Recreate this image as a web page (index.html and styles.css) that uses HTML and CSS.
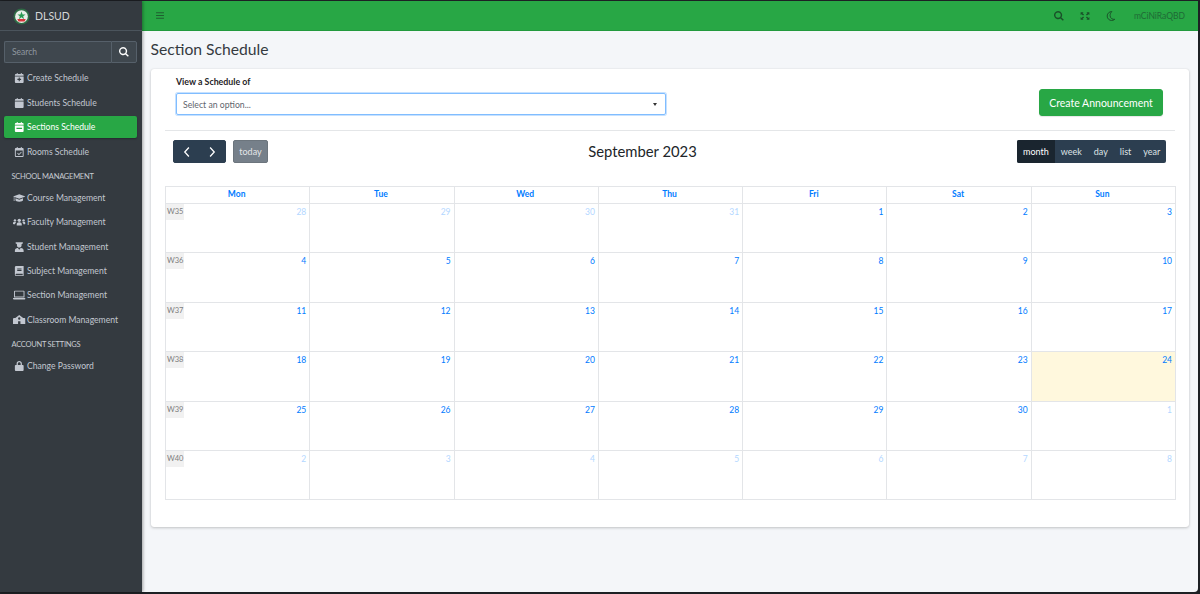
FILE: index.html
```html
<!DOCTYPE html>
<html lang="en">
<head>
<meta charset="utf-8">
<title>Section Schedule</title>
<link rel="stylesheet" href="styles.css">
</head>
<body>
<svg class="defs" width="0" height="0" aria-hidden="true">
  <defs>
    <symbol id="cal" viewBox="0 0 448 512"><path d="M96 0h48v48h160V0h48v48h48a48 48 0 0 1 48 48v48H0V96a48 48 0 0 1 48-48h48zM0 176h448v288a48 48 0 0 1-48 48H48a48 48 0 0 1-48-48z"/></symbol>
    <symbol id="cal-plus" viewBox="0 0 448 512"><path fill-rule="evenodd" d="M96 0h48v48h160V0h48v48h48a48 48 0 0 1 48 48v48H0V96a48 48 0 0 1 48-48h48zM0 176h448v288a48 48 0 0 1-48 48H48a48 48 0 0 1-48-48zM196 230v66h-66v56h66v66h56v-66h66v-56h-66v-66z"/></symbol>
    <symbol id="cal-minus" viewBox="0 0 448 512"><path fill-rule="evenodd" d="M96 0h48v48h160V0h48v48h48a48 48 0 0 1 48 48v48H0V96a48 48 0 0 1 48-48h48zM0 176h448v288a48 48 0 0 1-48 48H48a48 48 0 0 1-48-48zM80 290v70h288v-70z"/></symbol>
    <symbol id="cal-check" viewBox="0 0 448 512"><path fill-rule="evenodd" d="M96 0h48v48h160V0h48v48h48a48 48 0 0 1 48 48v368a48 48 0 0 1-48 48H48a48 48 0 0 1-48-48V96a48 48 0 0 1 48-48h48zM48 176v288h352V176zM320 240l32 32-144 144-88-88 32-32 56 56z"/></symbol>
    <symbol id="grad" viewBox="0 0 640 512"><path d="M320 64 640 176 320 288 0 176zM128 272l192 68 192-68v104c0 36-86 72-192 72s-192-36-192-72zM40 200l32 12v130l20 60H28l12-60z"/></symbol>
    <symbol id="users" viewBox="0 0 640 512"><circle cx="320" cy="170" r="85"/><circle cx="100" cy="170" r="60"/><circle cx="540" cy="170" r="60"/><path d="M190 430v-50c0-70 50-110 110-110h40c60 0 110 40 110 110v50zM0 350v-40c0-40 30-70 70-70h60c14 0 26 4 38 10-38 26-60 66-62 120H30c-16 0-30-4-30-20zM640 350v-40c0-40-30-70-70-70h-60c-14 0-26 4-38 10 38 26 60 66 62 120h76c16 0 30-4 30-20z"/></symbol>
    <symbol id="teacher" viewBox="0 0 448 512"><path d="M40 16h368v64l-64 16v70c0 66-54 118-120 118S104 232 104 166V96L40 80zM0 512v-70c0-74 58-134 132-134h20l72 90 72-90h20c74 0 132 60 132 134v70z"/></symbol>
    <symbol id="book" viewBox="0 0 448 512"><path fill-rule="evenodd" d="M70 0h378v512H70a70 70 0 0 1-70-70V70A70 70 0 0 1 70 0zm50 130v44h220v-44zm0 80v44h220v-44zM70 400a34 34 0 0 0 0 68h330v-68z"/></symbol>
    <symbol id="laptop" viewBox="0 0 640 512"><path fill-rule="evenodd" d="M90 32h460a38 38 0 0 1 38 38v310H52V70a38 38 0 0 1 38-38zm10 50v250h440V82zM0 412h640v20a48 48 0 0 1-48 48H48a48 48 0 0 1-48-48z"/></symbol>
    <symbol id="school" viewBox="0 0 640 512"><path fill-rule="evenodd" d="M320 0 520 150h70a50 50 0 0 1 50 50v262H0V200a50 50 0 0 1 50-50h70zm0 120a60 60 0 1 0 0 120 60 60 0 0 0 0-120zM260 320v142h120V320z"/></symbol>
    <symbol id="lock" viewBox="0 0 448 512"><path fill-rule="evenodd" d="M224 0c76 0 136 60 136 136v64h40a48 48 0 0 1 48 48v216a48 48 0 0 1-48 48H48a48 48 0 0 1-48-48V248a48 48 0 0 1 48-48h40v-64C88 60 148 0 224 0zm0 64c-40 0-72 32-72 72v64h144v-64c0-40-32-72-72-72z"/></symbol>
    <symbol id="search" viewBox="0 0 512 512"><path fill-rule="evenodd" d="M208 0a208 208 0 0 1 170 328l126 126-50 50-126-126A208 208 0 1 1 208 0zm0 72a136 136 0 1 0 0 272 136 136 0 0 0 0-272z"/></symbol>
    <symbol id="expand" viewBox="0 0 448 512"><path d="M0 60h150l-50 50 75 75-50 50-75-75-50 50zM448 60H298l50 50-75 75 50 50 75-75 50 50zM0 452h150l-50-50 75-75-50-50-75 75-50-50zM448 452H298l50-50-75-75 50-50 75 75 50-50z"/></symbol>
    <symbol id="moon" viewBox="0 0 512 512"><path fill="none" stroke="currentColor" stroke-width="48" d="M300 30C180 20 60 120 60 256s110 230 230 230c60 0 120-20 160-60-120 20-240-60-240-190 0-90 40-160 90-206z"/></symbol>
    <symbol id="bars" viewBox="0 0 448 512"><path d="M0 70h448v64H0zM0 224h448v64H0zM0 378h448v64H0z"/></symbol>
  </defs>
</svg>
<div class="frame">
  <aside class="sidebar">
    <div class="brand">
      <svg class="logo" viewBox="0 0 40 40" aria-hidden="true">
        <circle cx="20" cy="20" r="19" fill="#2f6b45"/>
        <circle cx="20" cy="20" r="15" fill="#e9efe8"/>
        <path d="M20 8l2.600 7h7l-5.600 4.400 2 7L20 22l-6 4.400 2-7L10.400 15h7z" fill="#2a9a52"/>
        <path d="M10 26h20l-3 6H13z" fill="#d8343a"/>
      </svg>
      <span class="brand-name">DLSUD</span>
    </div>
    <form class="search">
      <span class="search-input">Search</span>
      <span class="search-btn"><svg class="ic-search"><use href="#search"/></svg></span>
    </form>
    <nav class="menu">
      <a class="item"><svg class="ic"><use href="#cal-plus"/></svg><span>Create Schedule</span></a>
      <a class="item"><svg class="ic"><use href="#cal"/></svg><span>Students Schedule</span></a>
      <a class="item active"><svg class="ic"><use href="#cal-minus"/></svg><span>Sections Schedule</span></a>
      <a class="item"><svg class="ic"><use href="#cal-check"/></svg><span>Rooms Schedule</span></a>
      <div class="menu-head">SCHOOL MANAGEMENT</div>
      <a class="item"><svg class="ic"><use href="#grad"/></svg><span>Course Management</span></a>
      <a class="item"><svg class="ic"><use href="#users"/></svg><span>Faculty Management</span></a>
      <a class="item"><svg class="ic"><use href="#teacher"/></svg><span>Student Management</span></a>
      <a class="item"><svg class="ic"><use href="#book"/></svg><span>Subject Management</span></a>
      <a class="item"><svg class="ic"><use href="#laptop"/></svg><span>Section Management</span></a>
      <a class="item"><svg class="ic"><use href="#school"/></svg><span>Classroom Management</span></a>
      <div class="menu-head">ACCOUNT SETTINGS</div>
      <a class="item"><svg class="ic"><use href="#lock"/></svg><span>Change Password</span></a>
    </nav>
  </aside>
  <div class="main">
    <header class="topbar">
      <svg class="tb-bars"><use href="#bars"/></svg>
      <div class="tb-right">
        <svg class="tb-ic"><use href="#search"/></svg>
        <svg class="tb-ic"><use href="#expand"/></svg>
        <svg class="tb-ic"><use href="#moon"/></svg>
        <span class="tb-user">mCiNiRaQBD</span>
      </div>
    </header>
    <main class="content">
      <h1 class="page-title">Section Schedule</h1>
      <section class="card">
        <div class="filter">
          <div class="filter-field">
            <label class="filter-label">View a Schedule of</label>
            <div class="select"><span>Select an option...</span><i class="caret"></i></div>
          </div>
          <button class="btn-create" type="button">Create Announcement</button>
        </div>
        <hr class="rule">
        <div class="toolbar">
          <div class="tb-left">
            <div class="nav-group">
              <button class="nav-btn" type="button"><svg viewBox="0 0 10 16"><path d="M7.500 2 2 8l5.500 6" fill="none" stroke="#fff" stroke-width="1.700"/></svg></button>
              <button class="nav-btn" type="button"><svg viewBox="0 0 10 16"><path d="M2.500 2 8 8l-5.500 6" fill="none" stroke="#fff" stroke-width="1.700"/></svg></button>
            </div>
            <button class="today" type="button">today</button>
          </div>
          <h2 class="cal-title">September 2023</h2>
          <div class="views">
            <button class="view on" type="button">month</button>
            <button class="view" type="button">week</button>
            <button class="view" type="button">day</button>
            <button class="view" type="button">list</button>
            <button class="view" type="button">year</button>
          </div>
        </div>
        <div class="cal">
          <div class="dow">Mon</div><div class="dow">Tue</div><div class="dow">Wed</div><div class="dow">Thu</div><div class="dow">Fri</div><div class="dow">Sat</div><div class="dow">Sun</div>

          <div class="day off"><b class="wk">W35</b>28</div><div class="day off">29</div><div class="day off">30</div><div class="day off">31</div><div class="day">1</div><div class="day">2</div><div class="day">3</div>

          <div class="day"><b class="wk">W36</b>4</div><div class="day">5</div><div class="day">6</div><div class="day">7</div><div class="day">8</div><div class="day">9</div><div class="day">10</div>

          <div class="day"><b class="wk">W37</b>11</div><div class="day">12</div><div class="day">13</div><div class="day">14</div><div class="day">15</div><div class="day">16</div><div class="day">17</div>

          <div class="day"><b class="wk">W38</b>18</div><div class="day">19</div><div class="day">20</div><div class="day">21</div><div class="day">22</div><div class="day">23</div><div class="day now">24</div>

          <div class="day"><b class="wk">W39</b>25</div><div class="day">26</div><div class="day">27</div><div class="day">28</div><div class="day">29</div><div class="day">30</div><div class="day off">1</div>

          <div class="day off"><b class="wk">W40</b>2</div><div class="day off">3</div><div class="day off">4</div><div class="day off">5</div><div class="day off">6</div><div class="day off">7</div><div class="day off">8</div>
        </div>
      </section>
    </main>
  </div>
</div>
</body>
</html>
```

FILE: styles.css
```css
* { box-sizing: border-box; }
html, body { margin: 0; height: 100%; overflow: hidden; }
body { background: #1d2024; font-family: Lato, "Noto Sans", sans-serif; color: #212529; }
.defs { position: absolute; }
svg { fill: currentColor; display: block; }

.frame { display: flex; height: 594px; width: 1198px; padding-top: 1px; padding-bottom: 2px; }

/* sidebar */
.sidebar { width: 142px; flex: none; background: #343a40; box-shadow: 1px 0 3px rgba(0,0,0,.35); z-index: 1; }
.brand { height: 30px; display: flex; align-items: center; gap: 5px; padding: 1px 0 0 13px; border-bottom: 1px solid #4b545c; }
.logo { width: 17px; height: 17px; }
.brand-name { color: #d4d6d8; font-size: 10.500px; line-height: 1; }
.search { display: flex; height: 22px; margin: 10px 5px 0 4px; }
.search-input { flex: 1; background: #3f474e; border: 1px solid #56606a; border-right: 0; border-radius: 2px 0 0 2px; color: #8f98a0; font-size: 8.500px; line-height: 20px; padding-left: 7px; }
.search-btn { width: 26px; background: #3f474e; border: 1px solid #56606a; border-radius: 0 2px 2px 0; color: #fff; display: flex; align-items: center; justify-content: center; }
.ic-search { width: 10px; height: 10px; }
.menu { display: flex; flex-direction: column; margin-top: 3.300px; }
.item { height: 24.400px; margin: 0 5px 0 4px; padding: 0 0 0 9px; display: flex; align-items: center; gap: 1.500px; color: #c2c7d0; font-size: 8.600px; border-radius: 2px; white-space: nowrap; }
.item.active { height: 22px; margin: 1.200px 5px 1.200px 4px; background: #28a745; color: #fff; box-shadow: 0 1px 2px rgba(0,0,0,.3); }
.ic { width: 12.500px; height: 10px; flex: none; }
.menu-head { height: 21.800px; padding-left: 11.500px; color: #c8ccd2; font-size: 7.500px; letter-spacing: -.25px; line-height: 25px; }

/* main */
.main { flex: 1; min-width: 0; display: flex; flex-direction: column; background: #f4f6f9; border-bottom-right-radius: 4px; }
.topbar { height: 30px; background: #28a745; color: #1c5a2c; display: flex; align-items: center; justify-content: space-between; padding: 0 13px 0 14px; border-bottom: 1px solid #229a3e; }
.tb-bars { width: 8px; height: 9px; color: #1f5f30; }
.tb-right { display: flex; align-items: center; gap: 16px; }
.tb-ic { width: 10px; height: 10px; color: #1a4f29; }
.tb-user { color: #1f6a35; font-size: 8.500px; margin-left: 2px; }
.content { padding: 9px 9px 0 8.500px; }
.page-title { margin: 0 0 10px; font-size: 15.700px; line-height: 19px; font-weight: 400; color: #343a40; }
.card { background: #fff; border-radius: 3px; box-shadow: 0 0 1px rgba(0,0,0,.125), 0 1px 3px rgba(0,0,0,.2); height: 458px; margin-left: .5px; padding: 6px 14px 0 14px; }
.filter { display: flex; align-items: flex-start; justify-content: space-between; padding: 0 12px 0 11px; }
.filter-field { width: 490px; }
.filter-label { display: block; font-size: 8.800px; font-weight: 700; line-height: 12px; margin: 1px 0 5px; color: #1f2327; }
.select { height: 22px; border: 1px solid #80bdff; border-radius: 2px; box-shadow: 0 0 0 1px rgba(128,189,255,.45); display: flex; align-items: center; justify-content: space-between; padding: 0 8px 0 6px; font-size: 8.700px; color: #5f666d; }
.caret { width: 0; height: 0; border: 2px solid transparent; border-top: 3px solid #333; border-bottom: 0; }
.btn-create { width: 124px; height: 27px; margin-top: 14px; border: 1px solid #28a745; background: #28a745; color: #fff; border-radius: 3px; font: inherit; font-size: 10.500px; padding: 0; box-shadow: 0 1px 1px rgba(0,0,0,.1); }
.rule { border: 0; border-top: 1px solid #e4e6e8; margin: 14px 0 9px; }
.toolbar { display: flex; justify-content: space-between; align-items: center; height: 23px; padding: 0 9px 0 8px; margin-bottom: 23px; }
.tb-left { display: flex; gap: 7px; }
.nav-group { display: flex; background: #2c3e50; border: 1px solid #2c3e50; border-radius: 2px; height: 23px; width: 53px; }
.nav-btn { flex: 1; background: none; border: 0; padding: 0; display: flex; align-items: center; justify-content: center; }
.nav-btn svg { width: 8px; height: 12px; }
.today { width: 35px; height: 23px; background: #76808a; border: 1px solid #6c757d; border-radius: 2px; color: #e4e6e8; font: inherit; font-size: 9px; padding: 0; }
.cal-title { margin: 0; font-size: 14.800px; font-weight: 400; line-height: 23px; color: #212529; }
.views { display: flex; height: 23px; width: 149px; background: #2c3e50; border-radius: 2px; overflow: hidden; }
.view { background: none; border: 0; color: #dfe3e6; font: inherit; font-size: 9px; padding: 0 6px; flex: auto; }
.view.on { background: #1a252f; color: #fff; }

.cal { display: grid; grid-template-columns: repeat(7, 1fr); grid-template-rows: 17px repeat(6, 49.400px); width: 1011px; border: 1px solid #e3e5e8; border-width: 1px 0 0 1px; }
.dow { border: 1px solid #e3e5e8; border-width: 0 1px 1px 0; padding-right: 2px; text-align: center; font-size: 8.500px; font-weight: 700; line-height: 15px; color: #007bff; }
.day { position: relative; border: 1px solid #e3e5e8; border-width: 0 1px 1px 0; text-align: right; padding: 3px 3px 0 0; font-size: 8.500px; line-height: 11px; color: #007bff; }
.day.off { color: #b3d7ff; }
.day.now { background: #fff8dd; }
.wk { position: absolute; left: 0; top: 0; width: 18px; height: 16px; background: #f1f1f1; color: #7d7d7d; font-size: 7.500px; font-weight: 400; line-height: 15px; text-align: left; padding-left: 1px; }
```
